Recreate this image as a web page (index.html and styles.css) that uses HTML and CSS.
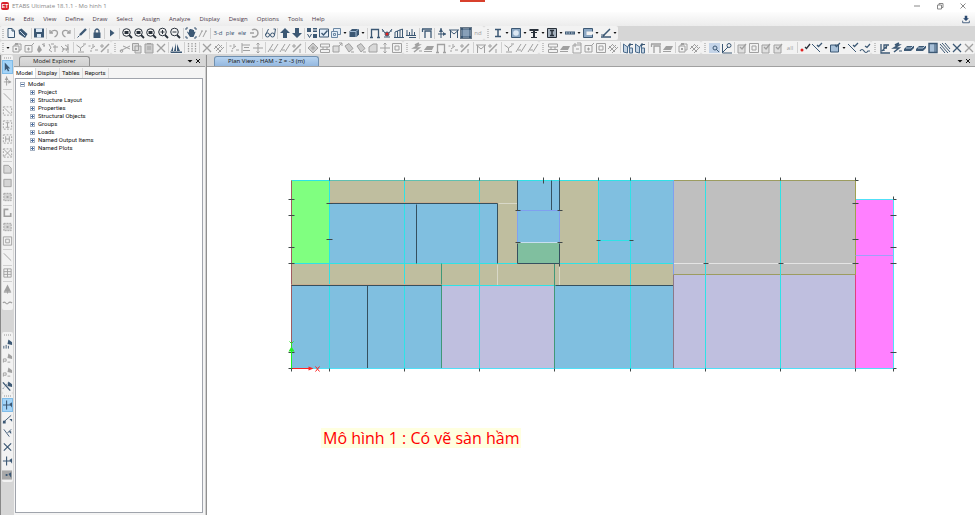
FILE: index.html
```html
<!DOCTYPE html>
<html lang="vi">
<head>
<meta charset="utf-8">
<title>ETABS Ultimate 18.1.1 - Mo hinh 1</title>
<link rel="stylesheet" href="styles.css">
</head>
<body>
<header class="titlebar">
  <span class="logo">ET</span>
  <h1 class="title">ETABS Ultimate 18.1.1 - Mo hinh 1</h1>
  <div class="window-buttons">
    <button aria-label="Minimize"><svg viewBox="0 0 8 8"><path d="M1 4h6"/></svg></button>
    <button aria-label="Restore"><svg viewBox="0 0 8 8"><path d="M1.500 3h4v4h-4zM3 3V1.500h4v4H5.500"/></svg></button>
    <button aria-label="Close"><svg viewBox="0 0 8 8"><path d="M1.500 1.500l5 5M6.500 1.500l-5 5"/></svg></button>
  </div>
  <span class="record-mark"></span>
</header>
<nav class="menubar">
  <button>File</button><button>Edit</button><button>View</button><button>Define</button><button>Draw</button><button>Select</button><button>Assign</button><button>Analyze</button><button>Display</button><button>Design</button><button>Options</button><button>Tools</button><button>Help</button>
  <button class="download" aria-label="Download"><svg viewBox="0 0 12 12"><path class="solid" d="M4.500 2h3v3h2L6 8.500 2.500 5h2z"/><path d="M2 8v2.500h8V8"/></svg></button>
</nav>
<div class="toolbar" id="main-tools"></div>
<div class="toolbar" id="edit-tools"></div>
<main class="workspace">
  <aside class="side-tools" id="side-tools"></aside>
  <section class="explorer">
    <div class="dock-head">
      <h2 class="dock-tab">Model Explorer</h2>
      <button class="dock-btn" aria-label="Panel menu"><svg viewBox="0 0 8 8"><path class="solid" d="M1.500 3h5L4 5.500z"/></svg></button>
      <button class="dock-btn" aria-label="Close panel"><svg viewBox="0 0 8 8"><path d="M2 2l4 4M6 2L2 6"/></svg></button>
    </div>
    <div class="page-tabs">
      <button class="active">Model</button><button>Display</button><button>Tables</button><button>Reports</button>
    </div>
    <div class="tree">
      <div class="node"><button class="toggle open" aria-label="Collapse Model"></button>Model</div>
      <ul>
        <li class="node"><button class="toggle" aria-label="Expand Project"></button>Project</li>
        <li class="node"><button class="toggle" aria-label="Expand Structure Layout"></button>Structure Layout</li>
        <li class="node"><button class="toggle" aria-label="Expand Properties"></button>Properties</li>
        <li class="node"><button class="toggle" aria-label="Expand Structural Objects"></button>Structural Objects</li>
        <li class="node"><button class="toggle" aria-label="Expand Groups"></button>Groups</li>
        <li class="node"><button class="toggle" aria-label="Expand Loads"></button>Loads</li>
        <li class="node"><button class="toggle" aria-label="Expand Named Output Items"></button>Named Output Items</li>
        <li class="node"><button class="toggle" aria-label="Expand Named Plots"></button>Named Plots</li>
      </ul>
    </div>
  </section>
  <section class="plan">
    <div class="dock-head">
      <h2 class="dock-tab blue">Plan View - HAM - Z = -3 (m)</h2>
      <button class="dock-btn" aria-label="View menu"><svg viewBox="0 0 8 8"><path class="solid" d="M1.500 3h5L4 5.500z"/></svg></button>
      <button class="dock-btn" aria-label="Close view"><svg viewBox="0 0 8 8"><path d="M2 2l4 4M6 2L2 6"/></svg></button>
    </div>
    <div class="canvas">
      <svg class="drawing" viewBox="280 170 630 210" role="img" aria-label="Floor plan">
        <g class="slabs">
          <path fill="#bfbe9f" d="M291 180h382v105H291z"/>
          <path fill="#80ff80" d="M291 180h38v83h-38z"/>
          <path fill="#80bfe0" d="M329 204h169v59H329zM291 285h151v83H291zM518 180h41v63h-41zM598 180h75v83h-75zM555 285h118v83H555z"/>
          <path fill="#80bf9f" d="M518 243h41v20h-41z"/>
          <path fill="#bfbfdf" d="M442 285h113v83H442zM673 274h182v94H673z"/>
          <path fill="#bfbfbf" d="M673 180h182v94H673z"/>
          <path fill="#ff80ff" d="M855 199h38v169h-38z"/>
        </g>
        <g class="lines" transform="translate(.5 .5)">
          <path stroke="#d8d8c8" d="M498 203h19M497 264v21M559 266v19"/>
          <path stroke="#e4e4e4" d="M673 263h182"/>
          <path stroke="#a05c60" d="M291 180v188"/>
          <path stroke="#9c9c60" d="M673 180h182v94H673"/>
          <path class="grid" d="M291 180h382M291 263h382M441 285h114M329 180v188M404 180v188M479 180v188M598 180v83M630 180v188M705 180v188M780 180v188M598 240h32"/>
          <path stroke="#60c0b0" d="M329 180h188"/>
          <path stroke="#409878" d="M441 263v105M554 263v105"/>
          <path stroke="#c8b090" d="M291 284h150M329 202h168"/>
          <path stroke="#35505f" d="M329 203h168v60M416 204v59M291 285h150M367 285v83M517 180v30M559 180v30M551 180v30M517 243v20h42v-20M555 285h118"/>
          <path stroke="#80a0f0" d="M517 210v32M559 210v32M517 210h42M673 180v94"/>
          <path stroke="#c8e0f0" d="M518 242h41"/>
          <path stroke="#8c7888" d="M673 274v94"/>
          <path stroke="#e04080" d="M855 274v94"/>
          <path stroke="#a0a050" d="M855 180v94"/>
          <path class="edge" d="M291 368h602V199h-38"/>
          <path stroke="#a0a0f8" d="M855 255h38"/>
          <path stroke="#404848" d="M288 199h6M288 215h6M288 247h6M288 263h6M288 352h6M288 368h6M326 203h6M326 239h6M515 210h5M557 210h5M515 242h5M557 242h5M596 240h4M629 240h4M703 263h5M778 263h5M852 203h6M852 239h6M852 263h6M890 215h6M890 247h6M890 263h6M890 352h6M893 199h3M893 368h3M855 180h3M329 177v3M404 177v3M479 177v3M543 177v6M559 177v3M598 177v3M630 177v3M705 177v3M780 177v3M855 177v3M893 196v3M291 368v3M329 368v3M404 368v3M479 368v3M554 368v3M630 368v3M705 368v3M780 368v3M855 368v3M893 368v3M559 263v3"/>
          <path stroke="#ff2020" d="M292 368h17M315 366l4 5M319 366l-4 5"/>
          <path class="head" fill="#ff2020" d="M308 366l5 2-5 2z"/>
          <path stroke="#20f020" d="M291 368v-18M289 341l2 2 2-2M291 343v3"/>
          <path class="head" fill="#20f020" d="M288 351l3-5 3 5z"/>
        </g>
      </svg>
      <p class="note">Mô hình 1 : Có vẽ sàn hầm</p>
    </div>
  </section>
</main>
<script src="app.js"></script>
</body>
</html>
```

FILE: styles.css
```css
* { box-sizing: border-box; margin: 0; padding: 0; }
html, body { height: 100%; }
body {
  display: flex;
  flex-direction: column;
  overflow: hidden;
  background: #d6d6d6;
  color: #2c2c3c;
  font: 6px/8px "Open Sans", "Noto Sans", sans-serif;
}
button { border: 0; background: none; font: inherit; color: inherit; }
h1, h2 { font: inherit; }
ul { list-style: none; }
svg { display: block; fill: none; stroke: currentColor; }
.solid { fill: currentColor; stroke: none; }

.titlebar {
  position: relative;
  display: flex;
  align-items: center;
  height: 12px;
  padding-left: 1px;
  background: #fff;
  color: #888;
}
.logo {
  width: 8px;
  height: 8px;
  margin-right: 3px;
  border-radius: 2px;
  background: #d8202c;
  color: #fff;
  font: bold 5px/8px "Liberation Sans", sans-serif;
  text-align: center;
}
.title { flex: 1; }
.window-buttons { display: flex; gap: 15px; padding-right: 8px; }
.window-buttons button, .window-buttons svg { width: 8px; height: 8px; }
.record-mark {
  position: absolute;
  top: 0;
  left: 47.2%;
  width: 25px;
  height: 2px;
  background: #d8402c;
}

.menubar {
  display: flex;
  align-items: center;
  gap: 9px;
  height: 14px;
  padding: 0 4px 0 5px;
  background: linear-gradient(#fdfdfd, #ececec);
  color: #4a3848;
}
.download { margin-left: auto; color: #2c4a70; }
.download svg { width: 10px; height: 10px; }

.toolbar { display: flex; height: 14px; margin-bottom: 1px; overflow: hidden; }
#edit-tools { height: 13px; }
.group { display: flex; flex: none; align-items: center; background: #f2f2f2; border-radius: 2px; }
.grip {
  flex: none;
  width: 5px;
  height: 12px;
  background: repeating-linear-gradient(#c4c4c4 0 1px, transparent 1px 2px) center / 2px 9px no-repeat;
}
.group + .group .grip { width: 8px; }
#edit-tools .group:last-child { flex: 1 0 auto; }
.sep { flex: none; width: 3px; height: 11px; background: linear-gradient(#d0d0d0, #d0d0d0) center / 1px 100% no-repeat; }
.sep.wide { width: 4px; }
.tool { flex: none; width: 12px; height: 12px; color: #3c5874; }
.tool svg { width: 12px; height: 12px; }
.tool.off { color: #a0a0a0; }
.tool.dark { color: #28303a; }
.tool.on { background: #a8b4c0; outline: 1px solid #687888; outline-offset: -1px; }
.tool.word { font-size: 6px; line-height: 12px; text-align: center; white-space: nowrap; }
.drop { flex: none; width: 6px; height: 12px; color: #101010; }
.drop svg { width: 6px; height: 12px; }

.workspace { flex: 1; display: flex; min-height: 0; }
.side-tools { display: flex; flex-direction: column; width: 13px; border-left: 1px solid #888; overflow: hidden; }
.side-tools .group { flex-direction: column; width: 11px; margin-left: 1px; }
.side-tools .group + .group .grip, .side-tools .grip {
  width: 10px;
  height: 5px;
  background: repeating-linear-gradient(90deg, #c4c4c4 0 1px, transparent 1px 2px) center / 8px 2px no-repeat;
}
.side-tools .sep { width: 9px; height: 2px; background: linear-gradient(#d0d0d0, #d0d0d0) center / 100% 1px no-repeat; }
.side-tools .tool { width: 11px; height: 14px; }
.side-tools .tool svg { width: 11px; height: 12px; }
.side-tools .tool.on { background: #a4d4f8; outline-color: #80bce8; }
.side-tools .gap { height: 22px; flex: none; }

.dock-head { display: flex; align-items: flex-end; height: 12px; padding-right: 3px; border-bottom: 1px solid #a0a0a0; }
.dock-tab {
  height: 10px;
  margin-right: auto;
  padding: 0 13px;
  border: 1px solid #909090;
  border-bottom: 0;
  border-radius: 3px 3px 0 0;
  background: linear-gradient(#dedede, #d0d0d0);
  color: #181818;
  line-height: 9px;
}
.dock-tab.blue { border-color: #7090b0; background: linear-gradient(#b8d4f0, #94b8e0); font-family: "Noto Sans", sans-serif; }
.dock-btn { width: 8px; height: 10px; color: #111; }
.dock-btn svg { width: 8px; height: 8px; }

.explorer { display: flex; flex-direction: column; width: 192px; margin-left: 1px; padding-bottom: 2px; background: #f4f4f4; border-right: 1px solid #d0d0d0; }
.explorer .dock-head { padding-left: 5px; background: #d6d6d6; }
.page-tabs { display: flex; height: 11px; padding-top: 1px; }
.page-tabs button { padding: 0 2px; border-right: 1px solid #dcdcdc; color: #111; font: 6px/10px Roboto, sans-serif; }
.page-tabs .active { background: #fff; }
.tree { flex: 1; margin: 0 2px 0 1px; padding: 1px 4px; border: 1px solid #a0a4ac; background: #fff; color: #111; font: 6px/8px Roboto, sans-serif; }
.node { display: flex; align-items: center; gap: 3px; }
.tree ul { margin-left: 10px; }
.toggle {
  width: 5px;
  height: 5px;
  border: 1px solid #a8b4c4;
  background: linear-gradient(#5070a0, #5070a0) center / 3px 1px no-repeat, linear-gradient(#5070a0, #5070a0) center / 1px 3px no-repeat;
}
.toggle.open { background: linear-gradient(#5070a0, #5070a0) center / 3px 1px no-repeat; }

.plan { flex: 1; display: flex; flex-direction: column; min-width: 0; border-left: 1px solid #909090; }
.plan .dock-head { padding-left: 7px; }
.canvas { flex: 1; padding: 103px 60px 0 73px; background: #fff; }
.drawing { width: 100%; max-width: 630px; }
.slabs, .head { stroke: none; }
.grid { stroke: #2ee2e6; shape-rendering: crispEdges; }
.edge { stroke: #50e0f8; shape-rendering: crispEdges; }
.note {
  width: max-content;
  margin: 48px 0 0 41px;
  padding: 0 2px;
  background: #ffffe0;
  color: #f00;
  font: 16px/20px "Open Sans", "Noto Sans", sans-serif;
}
```

FILE: app.js
```js
// Icon shapes on a 12x12 grid; stroked with the button's colour.
const icons = {
  page: '<path d="M3 1.500h4l2.500 2.500v6.500H3z" fill="#eef4fa"/><path d="M7 1.500V4h2.500"/>',
  book: '<path class="solid" d="M1.500 3l3-1.500 6 5.500-2.500 4-6-4z"/><path stroke="#c8d8e8" d="M3 4l5 5"/>',
  save: '<path class="solid" d="M1 1.500h10v9H1z"/><path fill="#dce8f4" stroke="none" d="M3 1.500h6v3.500H3zM4 7h4v3.500H4z"/>',
  undo: '<path stroke-width="1.300" d="M2 3v3h3M2.500 6c2-4 7-3 7 0 0 2-1 3-3 4"/>',
  redo: '<path stroke-width="1.300" d="M10 3v3H7M9.500 6c-2-4-7-3-7 0 0 2 1 3 3 4"/>',
  pencil: '<path stroke-width="2.400" d="M4 8l6-6"/><path d="M1.500 10.500l2-2"/>',
  lock: '<path class="solid" d="M2.500 5.500h7V11h-7z"/><path stroke-width="1.300" d="M4 6V3.500q2-3 4 0V6"/>',
  play: '<path class="solid" d="M4 2.500l4.500 3.500L4 9.500z"/>',
  lens: '<circle cx="5.500" cy="5.500" r="3.800"/><path stroke-width="1.800" d="M8 8l3 3"/><path class="solid" d="M3.500 4h4v3h-4z"/>',
  lensPlus: '<circle cx="5.500" cy="5" r="3.800"/><path stroke-width="1.800" d="M8 8l3 3"/><path d="M3.500 5h4M5.500 3v4"/>',
  lensMinus: '<circle cx="5.500" cy="5" r="3.800"/><path stroke-width="1.800" d="M8 8l3 3"/><path d="M3.500 5h4"/>',
  hand: '<path d="M1 3V1h2M9 1h2v2M1 9v2h2M11 9v2H9"/><path class="solid" d="M2 5l1-.5 1 1.500V2.500h1V2h1.500v.5H8V3h1v2l1-.5.5.5L8.500 10H5z"/>',
  slashes: '<path d="M2 10l3-6M6 10l3-6M4 4h2M8 4h2"/>',
  orbit: '<path stroke-width="1.500" d="M4 3c3-2 6 0 6 3s-3 5-6 3.500M2 6h4"/>',
  glasses: '<circle cx="3.500" cy="8" r="2"/><circle cx="8.500" cy="8" r="2"/><path d="M1.500 8l3-6M10.500 8l1-6h-2"/>',
  up: '<path class="solid" d="M6 1l5 5H8v5H4V6H1z"/>',
  down: '<path class="solid" d="M6 11L1 6h3V1h4v5h3z"/>',
  labels: '<path class="solid" d="M1 1h4v4H1zM7 1h4v1.500H7zM7 3.500h4V5H7zM7 7h4v4H7z"/><path d="M1.500 7l2 3.500 2-3.500"/>',
  check: '<path d="M1.500 2h9v8h-9z" fill="#e4eef8"/><path stroke-width="1.400" d="M3.500 6l2 2 4-4.500"/>',
  cube: '<path stroke="#6c88a4" d="M1.500 4.500h6v6h-6zM3.500 4V1.500h7v6H8M3.500 6.500h2v2h-2z" fill="#e4eef8"/>',
  cubeFull: '<path class="solid" d="M1.500 4.500L4 2h7v5.500L8.500 10h-7z"/><path stroke="#a4bcd4" d="M2 4.500h6V10M8 4.500L10.500 2"/>',
  frame: '<path stroke-width="1.300" d="M2.500 11V2.500h7V11M1 10.500h3M8 10.500h3"/>',
  joint: '<path d="M1 2l3 4M11 2L8 6M1 4h2M9 4h2M3 10h6"/><circle cx="6" cy="7" r="2" fill="#e02020"/>',
  bars: '<path d="M1 10.500h10M2 10V5M4.500 10V4M7 10V2.500M9.500 10V2M2 5l7.500-3"/>',
  force: '<path d="M1 8.500h10M2 8V3M4.500 8V5M7 8V2M9.500 8V5M4 10.500h7"/>',
  table: '<path stroke-width="1.300" d="M4 11V4h6v7M1 2h10M1.500 2v3"/>',
  node: '<path d="M5 1v10M2 7h8"/><path class="solid" d="M3 5l2-4 2 4zM7 5l3 2-3 2z"/>',
  truss: '<path d="M1 3h10M2.500 3v8M9.500 3v8M2.500 4L6 7l3.500-3"/>',
  area: '<path d="M2 2h8v8H2z" fill="#88a0b8"/><path class="solid" d="M1 1h2v2H1zM9 1h2v2H9zM1 9h2v2H1zM9 9h2v2H9z"/>',
  ibeam: '<path stroke-width="1.500" d="M3 2.500h6M6 2.500v7M3 9.500h6"/>',
  column: '<path d="M1.500 1.500h9v9h-9z" fill="#8ca8c4"/><circle cx="6" cy="6" r="2.800" fill="#dce8f4" stroke="none"/>',
  tee: '<path stroke-width="2" d="M1.500 3h9M6 3v7"/><path d="M3 10.500h6M3 5.500h6"/>',
  boxI: '<path d="M1.500 1.500h9v9h-9z" fill="#a4b0bc"/><path stroke-width="1.500" d="M4 3.500h4M6 3.500v5M4 8.500h4"/>',
  deck: '<path stroke-width="3" d="M1 6h10"/><path stroke="#d0dce8" stroke-dasharray="1.500 1" d="M2 6h8"/>',
  channel: '<path stroke-width="3" stroke="#8ca8c4" d="M10.500 3H3v6.500h7.500"/><path d="M10.500 4.500v-3h-9v9h9v-3"/>',
  angle: '<path stroke-width="1.500" d="M1 10h10M3 9l7-7"/><path d="M1 8h4"/>',
  box: '<path d="M2 4h6v6H2zM4 4V2h6v6H8"/><path class="solid" d="M4 1h3v2H4zM4 6h2v2H4z"/>',
  sketch: '<path d="M2 3.500h7V10H2zM9 3l2-2M4 7h3M5.500 5.500v3"/>',
  drop2: '<path class="solid" d="M4 3l3 5-3 3-2-3z"/><path d="M7 2l3 2M9 1v4"/>',
  spring: '<path d="M2 2l2 4-2 2 3 2M8 3v7M6 5h5M4 2h3"/>',
  mesh: '<path d="M2 4l3 3-2 3M6 3l3 2-2 4M9 2v9M3 7h7"/>',
  cross: '<path stroke-width="1.300" d="M2 2l8 8M10 2l-8 8"/>',
  tri: '<path d="M1.500 3l4 3 4-3M5.500 6v3M3 10h6M8 2h3"/>',
  dots: '<path d="M1.500 4h2M4 7l4-3M8 8h3M6 2v3M3 9h2"/>',
  diag: '<path stroke-width="1.500" d="M2 10l8-8"/><path d="M3 2v4M9 7v4M1 4h4"/>',
  cut: '<path d="M1 9l10-5M4 4l7 3"/><circle cx="2.500" cy="9" r="1.300"/>',
  copy: '<path d="M1.500 1.500h6v7h-6zM4 4h6v7H4z" fill="#dcdcdc"/>',
  paste: '<path d="M2 2h8v9H2z" fill="#ccc"/><path d="M4 5h4M4 7h4M4 1.500h4"/>',
  sails: '<path class="solid" d="M1 9l2-5v5zM4 9l2-8v8zM7 9V2l3 7zM0 9.500h12V11H1z"/>',
  grid: '<path stroke-width="1.300" stroke-dasharray="1.500 1" d="M2.500 1v10M6 1v10M9.500 1v10"/>',
  hatch: '<path d="M1 7l5-5M3 9l6-6M5 11l6-6M2 4l6 6M5 2l5 5"/>',
  align: '<path d="M2 1v10M2 3h8M4 5.500h5M3 8.500h7"/>',
  plus: '<path d="M6 1v10M1 6h10M4.500 2.500L6 1l1.500 1.500M4.500 9.500L6 11l1.500-1.500"/>',
  para: '<path d="M1 10l5-8M6 10l5-8M3 8h3"/>',
  diamond: '<path d="M6 1l5 5-5 5-5-5z" fill="#ccc"/><path d="M4 6h4M6 4v4"/>',
  stack: '<path d="M1.500 2h9v3h-9zM1.500 7.500h9v3h-9zM4 5v2.500M8 5v2.500"/>',
  square: '<path d="M2 4h6v6H2z" fill="#ddd"/><path d="M8 4l3-3M8 1h3v3"/>',
  tilt: '<path d="M2 4l4-2.500 4 5-4 3.500z" fill="#ccc"/><path d="M8 10h3"/>',
  shape: '<path d="M2 10V5l4-3h4v8z" fill="#d8d8d8"/>',
  rings: '<path d="M1.500 1.500h9v9h-9zM4 4h4v4H4z"/>',
  bolt: '<path stroke-width="1.600" d="M8 1L4 3h4L3 6h5L3 10"/><path d="M8 9h3"/>',
  slab: '<path class="solid" d="M1 8l3-4h7l-2 4zM1 9h8v1H1z"/>',
  doc: '<path d="M2 3h8v8H2zM4 1v4M6 1h4v2M5 7h3"/>',
  building: '<path stroke="#4c6c8c" d="M1.500 2v8l4 1V5zM5.500 5l2-3v5M7.500 6h3v5h-3z" fill="#c4d4e4"/><path d="M8 1v3M7 2.500h4"/>',
  find: '<path fill="#c4d4e8" stroke="none" d="M0 1h11v10H0z"/><circle cx="6" cy="6" r="2"/><path d="M7 7l3 3"/>',
  axes: '<path d="M1.500 2v9H11M2 10l5-5"/><circle cx="8" cy="3.500" r="2"/>',
  tick: '<path d="M2 3h7v8H2z" fill="#e0e0e0"/><path stroke-width="1.300" d="M4 5l2 2 4-5"/>',
  redDot: '<circle cx="3" cy="8" r="1.500" fill="#e02020" stroke="none"/><path stroke-width="1.300" d="M6 5l1.500 1.500L11 2"/>',
  lineTick: '<path d="M1 2l8 8"/><path stroke-width="1.300" d="M6 3l1.500 1.500L11 1"/>',
  areaTick: '<path d="M1.500 3h8v7h-8z" fill="#a8c0d8"/><path stroke-width="1.300" d="M6 3l1.500 1.500L11 1"/>',
  wave: '<path stroke-width="1.200" d="M1 9q2-3 4 0t4 0h2M6 4l2 1.500L11 2"/>',
  waveOnly: '<path stroke-width="1.200" d="M1 6q1.500-2 3 0t3 0 4 0"/>',
  plot: '<path stroke-width="1.300" d="M2 2v9h9M5 9V3h5M5 6h3M3 9l5-5"/>',
  plate: '<path class="solid" d="M1 7l3-3h7v2L8 9H1z"/><path stroke="#b8ccdf" d="M3 6h5l2-2"/>',
  slabBox: '<path d="M2 1.500h8v9H2z" fill="#a8c0d8" stroke-width="1.400"/><path d="M8 2v8"/>',
  lines: '<path d="M1 2l8 9M3 1l8 9M6 1l5 6M1 5l5 6"/>',
  pointer: '<path class="solid" d="M3 1v9l2-2 1.500 3 1.500-1L6.500 7.500H9z"/>',
  line: '<path d="M2 2l8 8"/>',
  dashLine: '<path stroke-dasharray="2 1.500" d="M1.500 1.500h9v9h-9z"/><path d="M3 3l6 6"/>',
  dashI: '<path stroke-dasharray="2 1.500" d="M1.500 1.500h9v9h-9z"/><path d="M4 3.500h4M6 3.500v5M4 8.500h4"/>',
  brace: '<path stroke-dasharray="2 1.500" d="M1.500 1.500h9v9h-9z"/><path d="M4 3v6M8 3v6M4 6h4"/>',
  dashX: '<path stroke-dasharray="2 1.500" d="M1.500 1.500h9v9h-9z"/><path d="M2 2l8 8M10 2l-8 8"/>',
  poly: '<path d="M2 2h5l3 3v5.500H2z" fill="#d8d8d8"/>',
  rect: '<path d="M2 2h8v8H2z" fill="#d4d4d4"/>',
  dashRect: '<path d="M2 2h8v8H2z" fill="#d4d4d4" stroke-dasharray="2 1"/><path class="solid" d="M5 5h2v2H5z"/>',
  wall: '<path stroke-width="1.800" d="M7 2H2.500v7.500h7V6"/>',
  window: '<path d="M2 1.500h8v9H2zM2 4.500h8M2 7.500h8M6 1.500v9"/>',
  tree: '<path class="solid" d="M6 1l4 8H2z"/><path d="M6 8v3M2 9.500h8"/>',
  snapA: '<path d="M2 11V8M4.500 11V7M7 11V8"/><path class="solid" d="M7 1l4 3v3L6 6z"/>',
  snapB: '<path d="M1.500 11V7h3v2.500h-3M6 10.500h3"/><path class="solid" d="M7 1l4 3v3L6 6z"/>',
  snapC: '<path stroke-width="1.500" d="M1 2l8 9"/><path stroke-dasharray="1 1" d="M1 9l6-7"/><path class="solid" d="M7 1l4 3v3L6 6z"/>',
  snapPlus: '<path stroke-width="1.200" d="M1 6h10M5 1v10"/><path class="solid" d="M8 5l3-2v6z"/>',
  snapLine: '<path d="M1 10l9-8"/><path class="solid" d="M8 6h3v3zM1 8h3v3H1z"/>',
  snapV: '<path d="M2 2l6 8M6 6l4-4"/><path class="solid" d="M7 4h3v3z"/>',
  snapGrid: '<path fill="#a8a8a8" stroke="none" d="M0 1h11v10H0z"/><path class="solid" d="M7 5l3-2v6zM4 5h2v2H4z"/>',
};

const drop = '<button class="drop" aria-label="More"><svg viewBox="0 0 6 12"><path class="solid" d="M1.500 5h3L3 7z"/></svg></button>';

// Item syntax: "|" thin separator, "||" wide separator, "v" drop arrow,
// "_" empty space, "'text" text tool, otherwise icon[.state].
function item(code) {
  if (code === '|') return '<span class="sep"></span>';
  if (code === '||') return '<span class="sep wide"></span>';
  if (code === 'v') return drop;
  const [name, state = ''] = code.split('.');
  if (name[0] === "'") return `<button class="tool word ${state}">${name.slice(1)}</button>`;
  return `<button class="tool ${state}" aria-label="${name}"><svg viewBox="0 0 12 12">${icons[name]}</svg></button>`;
}

function build(id, groups) {
  document.getElementById(id).innerHTML = groups.map(codes =>
    codes === '_' ? '<span class="gap"></span>'
      : `<div class="group"><span class="grip"></span>${codes.split(' ').map(item).join('')}</div>`).join('');
}

build('main-tools', [
  "page book || save | undo.off redo.off || pencil | lock | play | lens.dark lens.dark lens.dark lensPlus.dark lensMinus.dark || hand slashes.off | '3-d 'plɐ 'elɐ orbit.off || glasses | up down | labels check cube v cubeFull v | frame joint bars force || table | node truss area.on 'nd.off",
  'ibeam v column v tee.dark v boxI.dark v deck v channel v angle v'
]);
build('edit-tools', [
  'v box.off sketch.off drop2.off spring.off mesh.off || tri.off dots.off diag.off',
  'cut.off copy.off paste.off cross.off | sails || grid.off | cross.off hatch.off | dots.off align.off plus.off | para.off para.off diag.off || diamond.off stack.off square.off tilt.off tilt.off shape.off plus.off rings.off',
  'bolt.off slab.off frame.off dots.off diag.off || truss.off diag.off || tri.off para.off para.off',
  'stack.off slab.off doc.off sketch.off rings.off hatch.off | building building || table.off slab.off | box.off hatch.off',
  'find axes | tick.off rings.off tick.off tick.off \'all.off | redDot.dark lineTick v areaTick v lineTick wave',
  'plot bolt plate plate slabBox lines cross cross.off'
]);
build('side-tools', [
  'pointer.on node.off | line.off dashLine.off dashI.off brace.off dashX.off | poly.off rect.off dashRect.off | wall.off dashRect.off rings.off | line.off | window.off | tree.off waveOnly.off',
  '_',
  'snapA snapB.off snapB.off snapC',
  'snapPlus.on snapLine snapV cross snapPlus snapGrid'
]);
```
